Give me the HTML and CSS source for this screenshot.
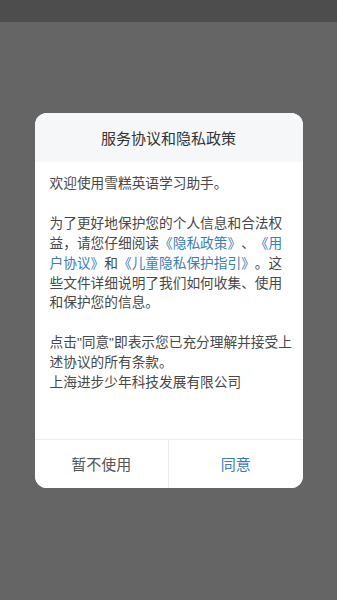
FILE: index.html
```html
<!DOCTYPE html>
<html lang="zh-CN">
<head>
  <meta charset="UTF-8" />
  <meta name="viewport" content="width=device-width, initial-scale=1.0"/>
  <title>服务协议和隐私政策</title>
  <link rel="stylesheet" href="styles.css">
</head>
<body>

  <div class="status-bar"></div>

  <div class="mask">
    <div class="dialog">
      <div class="dialog-title">服务协议和隐私政策</div>
      <div class="dialog-body">
        <p class="gap">欢迎使用雪糕英语学习助手。</p>
        <p class="gap">为了更好地保护您的个人信息和合法权益，请您仔细阅读<a href="#">《隐私政策》</a>、<a href="#">《用户协议》</a>和<a href="#">《儿童隐私保护指引》</a>。这些文件详细说明了我们如何收集、使用和保护您的信息。</p>
        <p>点击"同意"即表示您已充分理解并接受上述协议的所有条款。</p>
        <p>上海进步少年科技发展有限公司</p>
      </div>
      <div class="dialog-btns">
        <button class="btn-cancel">暂不使用</button>
        <button class="btn-ok">同意</button>
      </div>
    </div>
  </div>

</body>
</html>
```

FILE: styles.css
```css
* { box-sizing: border-box; margin:0; padding:0; }
html, body { height:100%; overflow:hidden; }
body { background:#656565; font-family:"Liberation Sans","Noto Sans CJK SC",sans-serif; display:flex; flex-direction:column; }

.status-bar { height:22px; background:#4d4d4d; flex:none; }

.mask { flex:1; padding-top:91px; }

.dialog { width:268px; margin:0 auto; background:#fff; border-radius:12px; overflow:hidden; }

.dialog-title { height:49px; display:flex; align-items:center; justify-content:center; background:#f6f7f9; color:#333; font-size:15px; }

.dialog-body { padding:12px 9px 46px 15px; color:#484848; font-size:13.7px; line-height:19.9px; text-spacing-trim:space-all; font-feature-settings:"halt" 0; }
.dialog-body p.gap { margin-bottom:19.9px; }
.dialog-body a { color:#3a7cc0; text-decoration:none; }

.dialog-btns { display:flex; border-top:1px solid #ececec; height:49px; }
.dialog-btns button { flex:1; border:none; background:#fff; font-family:inherit; font-size:15px; cursor:pointer; }
.btn-cancel { color:#555; border-right:1px solid #ececec !important; }
.btn-ok { color:#3a7cc0; }
```
